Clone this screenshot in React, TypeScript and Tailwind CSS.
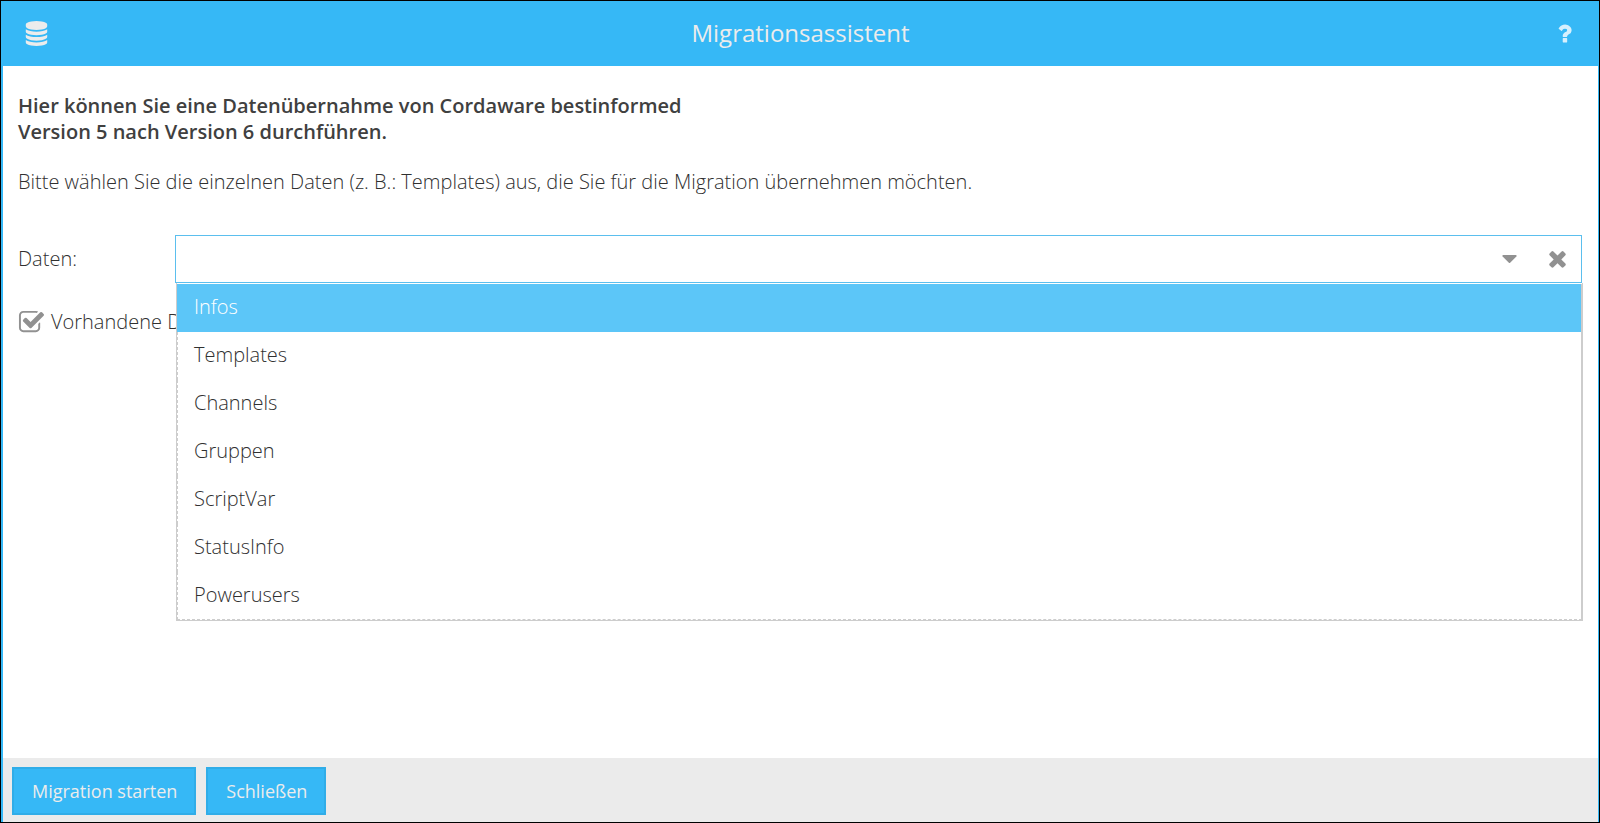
import { useState } from 'react'
import clsx from 'clsx'

const options = ['Infos', 'Templates', 'Channels', 'Gruppen', 'ScriptVar', 'StatusInfo', 'Powerusers']

const icons = {
  database:
    'M896 768q237 0 443-43t325-127v170q0 69-103 128t-280 93.5-385 34.5-385-34.5-280-93.5-103-128v-170q119 84 325 127t443 43zm0 768q237 0 443-43t325-127v170q0 69-103 128t-280 93.5-385 34.5-385-34.5-280-93.5-103-128v-170q119 84 325 127t443 43zm0-384q237 0 443-43t325-127v170q0 69-103 128t-280 93.5-385 34.5-385-34.5-280-93.5-103-128v-170q119 84 325 127t443 43zm0-1152q208 0 385 34.5t280 93.5 103 128v128q0 69-103 128t-280 93.5-385 34.5-385-34.5-280-93.5-103-128v-128q0-69 103-128t280-93.5 385-34.5z',
  question:
    'M1088 1256v240q0 16-12 28t-28 12h-240q-16 0-28-12t-12-28v-240q0-16 12-28t28-12h240q16 0 28 12t12 28zm316-600q0 54-15.5 101t-35 76.5-55 59.5-57.5 43.5-61 35.500q-41 23-68.500 65t-27.500 67q0 17-12 32.500t-28 15.500h-240q-15 0-25.500-18.500t-10.500-37.500v-45q0-83 65-156.500t143-108.500q59-27 84-56t25-76q0-42-46.500-74t-107.500-32q-65 0-108 29-35 25-107 115-13 16-31 16-12 0-25-8l-164-125q-13-10-15.500-25t5.500-28q160-266 464-266 80 0 161 31t146 83 106 127.500 41 158.500z',
  caret: 'M1408 704q0 26-19 45l-448 448q-19 19-45 19t-45-19l-448-448q-19-19-19-45t19-45 45-19h896q26 0 45 19t19 45z',
  times:
    'M1490 1322q0 40-28 68l-136 136q-28 28-68 28t-68-28l-294-294-294 294q-28 28-68 28t-68-28l-136-136q-28-28-28-68t28-68l294-294-294-294q-28-28-28-68t28-68l136-136q28-28 68-28t68 28l294 294 294-294q28-28 68-28t68 28l136 136q28 28 28 68t-28 68l-294 294 294 294q28 28 28 68z',
  square:
    'M1472 930v318q0 119-84.5 203.500t-203.500 84.500h-832q-119 0-203.500-84.500t-84.500-203.500v-832q0-119 84.500-203.500t203.500-84.500h832q63 0 117 25 15 7 18 23 3 17-9 29l-49 49q-10 10-23 10-3 0-9-2-23-6-45-6h-832q-66 0-113 47t-47 113v832q0 66 47 113t113 47h832q66 0 113-47t47-113v-254q0-13 9-22l64-64q10-10 23-10 6 0 12 3 20 8 20 29z',
  check:
    'M1703 441l-814 814q-24 24-57 24t-57-24l-430-430q-24-24-24-57t24-57l110-110q24-24 57-24t57 24l263 263 647-647q24-24 57-24t57 24l110 110q24 24 24 57t-24 57z',
}

function Icon({ paths, className }: { paths: string[]; className?: string }) {
  return (
    <svg viewBox="0 0 1792 1792" fill="currentColor" aria-hidden="true" className={className}>
      {paths.map((d) => (
        <path key={d} d={d} />
      ))}
    </svg>
  )
}

function DataSelect() {
  const [value, setValue] = useState('')
  const [open, setOpen] = useState(true)
  const [active, setActive] = useState(0)

  return (
    <div className="relative flex-1">
      <div className="flex h-12 items-center border border-[#5bbfee] bg-white pb-px text-[#919191]">
        <input
          id="daten"
          type="text"
          role="combobox"
          aria-expanded={open}
          aria-controls="daten-list"
          value={value}
          onChange={(e) => setValue(e.target.value)}
          className="h-full min-w-0 flex-1 px-4 text-[#303030] outline-none"
        />
        <button type="button" aria-label="Liste öffnen" onClick={() => setOpen(!open)} className="flex w-12 justify-center">
          <Icon paths={[icons.caret]} className="size-[25px]" />
        </button>
        <button type="button" aria-label="Auswahl löschen" onClick={() => setValue('')} className="flex w-12 justify-center">
          <Icon paths={[icons.times]} className="size-[25px]" />
        </button>
      </div>

      {open && (
        <div className="absolute top-full -right-px left-px z-10 border border-t-0 border-[#cdcdcd] bg-white pt-px">
          <ul id="daten-list" role="listbox" aria-label="Daten">
            {options.map((name, i) => (
              <li
                key={name}
                role="option"
                aria-selected={i === active}
                onMouseEnter={() => setActive(i)}
                onClick={() => {
                  setValue(name)
                  setOpen(false)
                }}
                className={clsx(
                  'h-12 cursor-pointer border-r border-r-[#cdcdcd] px-4 leading-[46px]',
                  i === active
                    ? 'border-l border-l-[#5cc6f8] bg-[#5cc6f8] text-white'
                    : 'border-l border-l-[#cdcdcd] [border-left-style:dashed]',
                  i === options.length - 1 && 'border-b border-b-[#cdcdcd] [border-bottom-style:dashed]',
                )}
              >
                {name}
              </li>
            ))}
          </ul>
        </div>
      )}
    </div>
  )
}

export default function App() {
  const [keep, setKeep] = useState(true)

  return (
    <div className="flex min-h-screen flex-col border border-black bg-[#36b8f6] font-['Open_Sans','Noto_Sans',sans-serif] text-xl font-light text-[#303030]">
      <header className="flex h-[65px] items-center justify-between pr-[22px] pb-px pl-[23px] text-[#ececec]">
        <Icon paths={[icons.database]} className="size-[25px]" />
        <h1 className="text-2xl font-normal">Migrationsassistent</h1>
        <button type="button" aria-label="Hilfe" className="text-[#d7f0fd]">
          <Icon paths={[icons.question]} className="size-[25px]" />
        </button>
      </header>

      <div className="mr-px ml-0.5 flex flex-1 flex-col bg-white">
        <main className="flex-1 px-4 pt-[27px] pl-[15px]">
          <p className="max-w-[700px] leading-[26px] font-semibold text-[#404040]">
            Hier können Sie eine Datenübernahme von Cordaware bestinformed Version 5 nach Version 6 durchführen.
          </p>
          <p className="mt-6 leading-[26px]">
            Bitte wählen Sie die einzelnen Daten (z. B.: Templates) aus, die Sie für die Migration übernehmen möchten.
          </p>

          <form className="mt-10">
            <div className="flex items-center">
              <label htmlFor="daten" className="w-[157px]">
                Daten:
              </label>
              <DataSelect />
            </div>
            <label className="mt-[25px] flex items-center gap-1.5">
              <input type="checkbox" checked={keep} onChange={(e) => setKeep(e.target.checked)} className="sr-only" />
              <Icon paths={keep ? [icons.square, icons.check] : [icons.square]} className="mt-px size-[27px] text-[#919191]" />
              Vorhandene D
            </label>
          </form>
        </main>

        <footer className="flex gap-2.5 bg-[#ebebeb] px-[9px] pt-[9px] pb-[7px] text-lg font-normal text-[#ececec]">
          <button type="button" className="h-12 border-2 border-[#30ade8] bg-[#36b8f6] pr-[17px] pl-[18px]">
            Migration starten
          </button>
          <button type="button" className="h-12 border-2 border-[#30ade8] bg-[#36b8f6] pr-[17px] pl-[18px]">
            Schließen
          </button>
        </footer>
      </div>
    </div>
  )
}
